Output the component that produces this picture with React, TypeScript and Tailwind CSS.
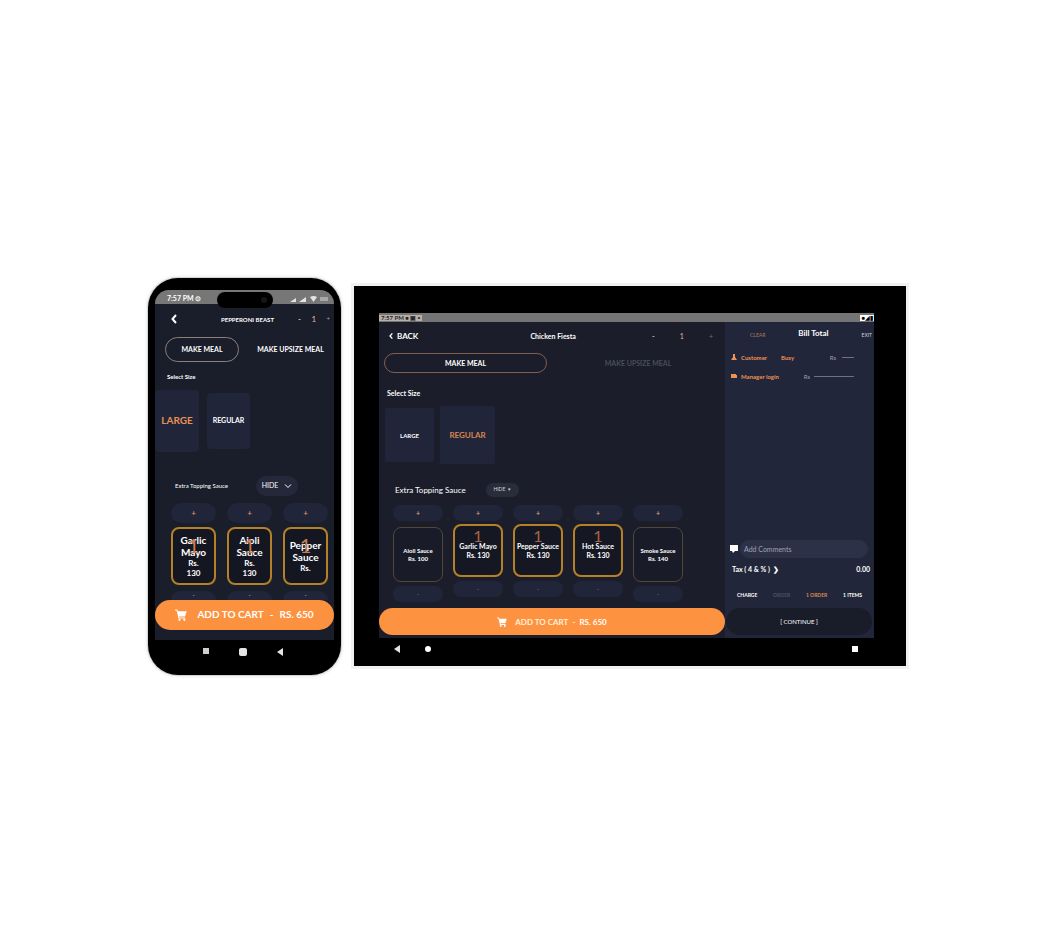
import type { ReactNode } from "react";

const phoneSauces = [
  { name: "Garlic Mayo", price: "Rs. 130" },
  { name: "Aioli Sauce", price: "Rs. 130" },
  { name: "Pepper Sauce", price: "Rs." },
];

const tabletSauces = [
  { name: "Aioli Sauce", price: "Rs. 100", selected: false },
  { name: "Garlic Mayo", price: "Rs. 130", selected: true },
  { name: "Pepper Sauce", price: "Rs. 130", selected: true },
  { name: "Hot Sauce", price: "Rs. 130", selected: true },
  { name: "Smoke Sauce", price: "Rs. 140", selected: false },
];

function CartIcon({ className }: { className: string }) {
  return (
    <svg viewBox="0 0 12 12" className={className} fill="currentColor" aria-hidden="true">
      <path d="M0 .5h2.3l.7 1.7h8.7L10 7.5H4l.3 1h6v1H3.4L3 7 1.6 1.6H0z" />
      <circle cx="4.5" cy="10.8" r="1.1" />
      <circle cx="9.3" cy="10.8" r="1.1" />
    </svg>
  );
}

function BackIcon({ className }: { className: string }) {
  return (
    <svg viewBox="0 0 6 10" className={className} fill="none" stroke="currentColor" strokeWidth="2" aria-hidden="true">
      <path d="M5 1 1.5 5 5 9" />
    </svg>
  );
}

function SignalIcons() {
  return (
    <svg viewBox="0 0 40 8" className="h-2 w-10" fill="#e4e4e4" aria-hidden="true">
      <path d="M0 7 6 3v4zM9 7l7-5v5zM20 2q4-2 7 0L23.5 7z" />
      <rect x="30" y="2" width="8" height="4" opacity=".45" />
    </svg>
  );
}

function Triangle() {
  return (
    <svg viewBox="0 0 6 8" className="h-2 w-1.5" fill="#e5e5e5" aria-hidden="true">
      <path d="M6 0v8L0 4z" />
    </svg>
  );
}

function Step({ children, label, className }: { children: ReactNode; label: string; className: string }) {
  return (
    <button aria-label={label} className={"flex w-full items-center justify-center bg-[#212539] font-bold leading-none " + className}>
      {children}
    </button>
  );
}

function Phone() {
  return (
    <section className="w-[193px] shrink-0 rounded-[30px] bg-black px-[7px] pt-3 shadow-[0_0_0_1px_#d4d4d4,0_0_3px_2px_#eeeeee]">
      <div className="overflow-hidden rounded-t-[14px] bg-[#1a1d2a]">
        <div className="relative flex h-3.5 items-center justify-between bg-[#777777] pt-1 pr-1 pl-3 text-[7px] font-bold text-white">
          <span>7:57 PM ⊙</span>
          <SignalIcons />
          <div className="absolute top-0.5 left-1/2 flex h-4 w-14 -translate-x-1/2 items-center justify-end rounded-full bg-black pr-1.5">
            <span className="size-1.5 rounded-full bg-[#15151b]" />
          </div>
        </div>
        <header className="flex h-[30px] items-center pr-1 pl-4">
          <button aria-label="Back"><BackIcon className="h-2.5 w-1.5" /></button>
          <h1 className="flex-1 pt-0.5 pl-5 text-center text-[6px] font-bold">PEPPERONI BEAST</h1>
          <div className="flex w-8 items-center justify-between text-[8px]">
            <button aria-label="Fewer">-</button>
            <span className="text-[#e9b48e]">1</span>
            <button aria-label="More" className="text-[6px] text-gray-400">+</button>
          </div>
        </header>
        <div className="flex items-center pt-[3px] pl-2.5 text-[7px] font-bold">
          <button className="h-[25px] w-[74px] rounded-full border border-[#8b7e7b]">MAKE MEAL</button>
          <button className="flex-1 pl-2 whitespace-nowrap">MAKE UPSIZE MEAL</button>
        </div>
        <h2 className="pt-2.5 pl-3 text-[6px] leading-2.5 font-bold">Select Size</h2>
        <div className="flex items-center gap-2 pt-2 text-[8px] font-bold">
          <button className="h-[62px] w-11 rounded-sm bg-[#212539] text-[10px] text-[#e99155]">LARGE</button>
          <button className="h-14 w-[43px] rounded-sm bg-[#212539] text-[7px]">REGULAR</button>
        </div>
        <div className="flex items-center justify-between pt-6 pr-9 pl-5">
          <h2 className="text-[6px]">Extra Topping Sauce</h2>
          <button className="flex h-5 w-[42px] items-center justify-center gap-1.5 rounded-full bg-[#25283a] text-[7px]">
            HIDE
            <svg viewBox="0 0 8 5" className="h-1.5 w-2" fill="none" stroke="currentColor" aria-hidden="true"><path d="m1 1 3 3 3-3" /></svg>
          </button>
        </div>
        <div className="flex gap-[11px] pt-[7px] pl-4">
          {phoneSauces.map((s) => (
            <div key={s.name} className="w-[45px] shrink-0">
              <Step label={"Add " + s.name} className="h-5 rounded-full text-[8px] text-[#e48b50]">+</Step>
              <article className="relative mt-1 flex h-[58px] flex-col items-center justify-center rounded-lg border-2 border-[#b58128] bg-[#141722] text-center font-bold">
                <h3 className="px-1 text-[10px] leading-3">{s.name}</h3>
                <p className="px-2 text-[8px] leading-2.5">{s.price}</p>
                <span className="absolute inset-x-0 top-1.5 text-[20px] leading-5 font-normal text-[#c77e4f]">1</span>
              </article>
              <Step label={"Remove " + s.name} className="mt-1.5 h-[9px] rounded-t-full text-[6px] text-[#e48b50]">-</Step>
            </div>
          ))}
        </div>
        <button className="flex h-[30px] w-full items-center justify-center rounded-full bg-[#fc9140] text-[10px] font-bold">
          <CartIcon className="mr-2.5 size-3" />
          ADD TO CART<span className="mx-1.5">-</span>RS. 650
        </button>
        <div className="h-2.5" />
      </div>
      <nav className="flex h-[35px] items-start justify-center gap-[30px] pt-2 pr-1">
        <button aria-label="Recent apps" className="flex h-2"><span className="size-1.5 bg-[#cfcfcf]" /></button>
        <button aria-label="Home" className="flex h-2"><span className="size-2 rounded-xs bg-[#e5e5e5]" /></button>
        <button aria-label="Back" className="flex h-2"><Triangle /></button>
      </nav>
    </section>
  );
}

function Bill() {
  return (
    <aside className="flex w-[149px] shrink-0 flex-col bg-[#22263a] text-[6px]">
      <header className="flex h-[27px] items-center pt-px pr-0.5 pl-[25px]">
        <button className="text-[5px] text-[#b77853]">CLEAR</button>
        <h2 className="flex-1 pb-1.5 text-center text-[8px] leading-3 font-bold">Bill Total</h2>
        <button className="text-[5px] text-gray-300">EXIT</button>
      </header>
      <div className="flex h-4 items-center pr-5 pl-1.5 font-bold text-[#ef9151]">
        <svg viewBox="0 0 6 6" className="mr-1 size-1.5" fill="currentColor" aria-hidden="true"><path d="M2 0h2v3l2 3H0l2-3z" /></svg>
        <span>Customer</span><span className="ml-3.5">Busy</span>
        <span className="ml-auto font-normal text-gray-400">Rs</span>
        <span className="ml-1.5 h-px w-3 bg-gray-500" />
      </div>
      <div className="flex h-[22px] items-center pr-5 pl-1.5 font-bold text-[#ef9151]">
        <svg viewBox="0 0 6 6" className="mr-1 size-1.5" fill="currentColor" aria-hidden="true"><path d="M0 1h5v1h1v3H0z" /></svg>
        <span>Manager login</span>
        <span className="ml-auto font-normal text-gray-400">Rs</span>
        <span className="ml-1 h-px w-10 bg-gray-500" />
      </div>
      <div className="mt-auto flex items-center gap-0.5 pr-1.5 pl-[5px]">
        <svg viewBox="0 0 8 8" className="size-2" fill="white" aria-hidden="true"><path d="M0 0h8v6H5L3 8 2 6H0z" /></svg>
        <input aria-label="Add Comments" placeholder="Add Comments" className="h-[18px] w-0 flex-1 rounded-full bg-[#2d3147] px-1 text-[7px] outline-none placeholder:text-[#a0a3b0]" />
      </div>
      <div className="flex h-[22px] items-center justify-between pr-1 pl-[7px] text-[7px] font-bold">
        <span>Tax ( 4 &amp; % )&nbsp; ❯</span><span>0.00</span>
      </div>
      <div className="flex h-7 items-center justify-between px-3 pt-1 text-[5px] font-bold">
        <span>CHARGE</span><span className="text-[#4d5267]">ORDER</span><span className="text-[#dd8a50]">1 ORDER</span><span>1 ITEMS</span>
      </div>
      <button className="mr-0.5 mb-[3px] ml-px h-[27px] rounded-full bg-[#191d2a] text-[6px]">[ CONTINUE ]</button>
    </aside>
  );
}

function Tablet() {
  return (
    <section className="w-full max-w-[552px] min-w-[520px] bg-black px-[25px] pt-[27px] shadow-[0_0_0_3px_#f1f1f1]">
      <div className="mr-[7px] bg-[#1b1e2a]">
        <div className="flex h-[9px] items-center justify-between bg-[#747474] text-[6px] leading-none font-bold">
          <span className="bg-[#b7b0aa] px-0.5 text-[#27231f]">7:57 PM ● ▣ ▪</span>
          <span className="bg-white px-px text-black">●◢▮</span>
        </div>
        <div className="flex h-[316px]">
          <main className="flex min-w-0 flex-1 flex-col">
            <header className="flex h-7 items-center pr-3 pl-2.5">
              <button className="flex items-center gap-1 text-[8px] font-bold"><BackIcon className="h-2 w-1" />BACK</button>
              <h1 className="flex-1 pl-9 text-center text-[7px] font-bold">Chicken Fiesta</h1>
              <div className="flex w-[61px] items-center justify-between text-[7px]">
                <button aria-label="Fewer">-</button><span className="text-[#e9b48e]">1</span><button aria-label="More" className="text-gray-500">+</button>
              </div>
            </header>
            <div className="flex items-center pt-[3px] pl-[5px] text-[7px] font-bold">
              <button className="h-5 w-[163px] rounded-full border border-[#805f51]">MAKE MEAL</button>
              <button className="flex-1 pl-1 text-[#494d59]">MAKE UPSIZE MEAL</button>
            </div>
            <h2 className="pt-[15px] pl-2 text-[7px] leading-2.5 font-bold">Select Size</h2>
            <div className="flex items-center gap-1.5 pt-2 pl-1.5 text-[6px] font-bold">
              <button className="h-[54px] w-[49px] rounded-xs bg-[#212539]">LARGE</button>
              <button className="h-[58px] w-[55px] rounded-xs bg-[#212539] text-[8px] text-[#d78650]">REGULAR</button>
            </div>
            <div className="flex items-center gap-5 pt-[19px] pl-4">
              <h2 className="text-[8px] leading-3">Extra Topping Sauce</h2>
              <button className="h-3.5 w-[33px] rounded-full bg-[#292c3a] text-[5px] text-gray-300">HIDE &nbsp;▾</button>
            </div>
            <div className="flex gap-2.5 pt-2 pl-3.5">
              {tabletSauces.map((s) => (
                <div key={s.name} className="w-[50px]">
                  <Step label={"Add " + s.name} className="h-4 rounded-lg text-[7px] text-[#dda06b]">+</Step>
                  <article
                    className={
                      s.selected
                        ? "relative mt-[3px] flex h-[53px] flex-col items-center justify-center rounded-lg border-2 border-[#b58128] bg-[#151823] text-center text-[7px] leading-[9px] font-bold"
                        : "mt-1.5 flex h-[55px] flex-col items-center justify-center rounded-lg border border-[#514733] bg-[#191c28] text-center text-[6px] leading-2 font-bold"
                    }
                  >
                    <h3 className="whitespace-nowrap">{s.name}</h3>
                    <p>{s.price}</p>
                    {s.selected && <span className="absolute inset-x-0 top-0.5 text-[16px] leading-4 font-normal text-[#a86543]">1</span>}
                  </article>
                  <Step label={"Remove " + s.name} className="mt-1 h-4 rounded-lg text-[6px] text-[#6f6970]">-</Step>
                </div>
              ))}
            </div>
            <button className="mt-auto mb-[3px] flex h-[27px] items-center justify-center rounded-full bg-[#fd9341] text-[8px] font-bold text-[#fff0d8]">
              <CartIcon className="mr-2 size-2.5 text-white" />
              ADD TO CART<span className="mx-1">-</span><span className="text-white">RS. 650</span>
            </button>
          </main>
          <Bill />
        </div>
      </div>
      <nav className="flex h-7 items-start gap-[25px] pt-[7px] pr-[23px] pl-[15px]">
        <button aria-label="Back" className="flex"><Triangle /></button>
        <button aria-label="Home" className="flex pt-px"><span className="size-1.5 rounded-full bg-white" /></button>
        <button aria-label="Recent apps" className="ml-auto flex pt-px"><span className="size-1.5 bg-white" /></button>
      </nav>
    </section>
  );
}

export default function App() {
  return (
    <div className="flex min-h-screen items-center justify-center gap-[13px] bg-white pt-1 pl-1.5 font-['Lato','Liberation_Sans',sans-serif] text-white">
      <Phone />
      <Tablet />
    </div>
  );
}
